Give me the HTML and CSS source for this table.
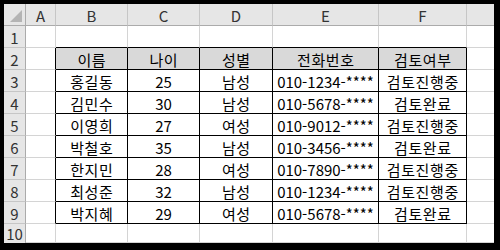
FILE: index.html
```html
<!DOCTYPE html>
<html lang="ko">
<head>
<meta charset="utf-8">
<link rel="stylesheet" href="styles.css">
</head>
<body>
<div class="frame">
  <div class="sheet">
    <div class="corner"><span class="tri"></span></div>
    <div class="ch">A</div><div class="ch">B</div><div class="ch">C</div><div class="ch">D</div><div class="ch">E</div><div class="ch">F</div><div class="ch"></div>

    <div class="rh">1</div><div class="c"></div><div class="c tb"></div><div class="c tb"></div><div class="c tb"></div><div class="c tb"></div><div class="c tb tl"></div><div class="c"></div>

    <div class="rh">2</div><div class="c tr"></div><div class="c t th ko">이름</div><div class="c t th ko">나이</div><div class="c t th ko">성별</div><div class="c t th ko">전화번호</div><div class="c t th ko">검토여부</div><div class="c"></div>

    <div class="rh">3</div><div class="c tr"></div><div class="c t ko">홍길동</div><div class="c t">25</div><div class="c t ko">남성</div><div class="c t">010-1234-****</div><div class="c t ko">검토진행중</div><div class="c"></div>
    <div class="rh">4</div><div class="c tr"></div><div class="c t ko">김민수</div><div class="c t">30</div><div class="c t ko">남성</div><div class="c t">010-5678-****</div><div class="c t ko">검토완료</div><div class="c"></div>
    <div class="rh">5</div><div class="c tr"></div><div class="c t ko">이영희</div><div class="c t">27</div><div class="c t ko">여성</div><div class="c t">010-9012-****</div><div class="c t ko">검토진행중</div><div class="c"></div>
    <div class="rh">6</div><div class="c tr"></div><div class="c t ko">박철호</div><div class="c t">35</div><div class="c t ko">남성</div><div class="c t">010-3456-****</div><div class="c t ko">검토완료</div><div class="c"></div>
    <div class="rh">7</div><div class="c tr"></div><div class="c t ko">한지민</div><div class="c t">28</div><div class="c t ko">여성</div><div class="c t">010-7890-****</div><div class="c t ko">검토진행중</div><div class="c"></div>
    <div class="rh">8</div><div class="c tr"></div><div class="c t ko">최성준</div><div class="c t">32</div><div class="c t ko">남성</div><div class="c t">010-1234-****</div><div class="c t ko">검토진행중</div><div class="c"></div>
    <div class="rh">9</div><div class="c tr"></div><div class="c t ko">박지혜</div><div class="c t">29</div><div class="c t ko">여성</div><div class="c t">010-5678-****</div><div class="c t ko">검토완료</div><div class="c"></div>

    <div class="rh last">10</div><div class="c"></div><div class="c"></div><div class="c"></div><div class="c"></div><div class="c"></div><div class="c"></div><div class="c"></div>
  </div>
</div>
</body>
</html>
```
FILE: styles.css
```css
html, body {
  margin: 0;
  padding: 0;
  background: #000;
}
.frame {
  width: 490px;
  height: 239px;
  margin: 4px 0 0 4px;
  overflow: hidden;
  background: #fff;
}
.sheet {
  display: grid;
  grid-template-columns: 22px 30px 72px 72px 73px 106px 88px 40px;
  grid-template-rows: repeat(10, 22px) 19px;
  font-family: "Noto Sans CJK KR", "Noto Sans", sans-serif;
  font-size: 15px;
  color: #000;
}
.sheet > div {
  box-sizing: border-box;
  display: flex;
  align-items: center;
  justify-content: center;
  line-height: 1;
  white-space: nowrap;
}
.ko { letter-spacing: 0.6px; text-indent: 0.6px; }
.corner {
  background: #e6e6e6;
  border-right: 1px solid #ababab;
  border-bottom: 1px solid #ababab;
  align-items: flex-end !important;
  justify-content: flex-end !important;
  padding: 0 3px 3px 0;
}
.tri {
  width: 0;
  height: 0;
  border-left: 12px solid transparent;
  border-bottom: 12px solid #b4b4b4;
}
.ch {
  background: #e6e6e6;
  border-right: 1px solid #c6c6c6;
  border-bottom: 1px solid #ababab;
  color: #333;
  padding-top: 1px;
}
.rh {
  background: #e6e6e6;
  border-right: 1px solid #ababab;
  border-bottom: 1px solid #c6c6c6;
  color: #333;
  padding-top: 2px;
}
.rh.last { padding-top: 0; border-bottom: none; }
.c {
  border-right: 1px solid #d4d4d4;
  border-bottom: 1px solid #d4d4d4;
  padding-top: 2px;
}
.tb { border-bottom-color: #000; }
.tr { border-right-color: #000; }
.t {
  border-right-color: #000;
  border-bottom-color: #000;
}
.th { background: #d9d9d9; }
```
